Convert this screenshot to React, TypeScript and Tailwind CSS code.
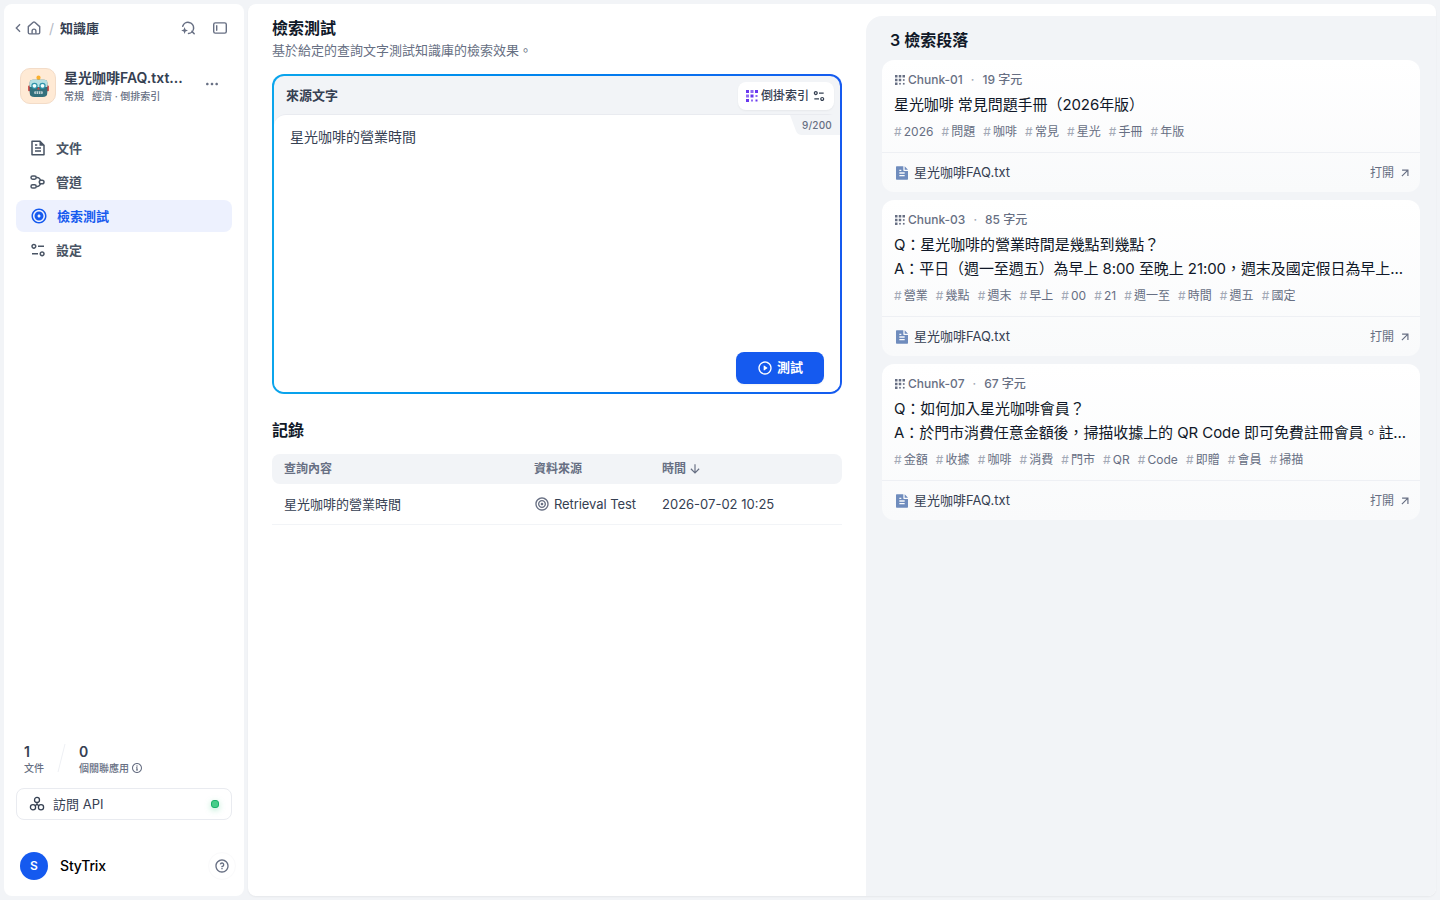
import type { ReactNode, SVGProps } from "react"
import clsx from "clsx"
import {
  RiArrowDownLine, RiArrowLeftSLine, RiArrowRightUpLine, RiEqualizer2Line,
  RiFileTextFill, RiFileTextLine, RiFocus2Fill, RiFocus2Line,
  RiInformation2Line, RiMoreFill, RiPlayCircleLine, RiQuestionLine,
} from "react-icons/ri"

type IconProps = SVGProps<SVGSVGElement>

function HomeIcon(props: IconProps) {
  return (
    <svg viewBox="0 0 16 16" fill="none" stroke="currentColor" strokeWidth="1.4" strokeLinejoin="round" {...props}>
      <path d="M2.3 6.6 7.2 2.3a1.3 1.3 0 0 1 1.6 0l4.9 4.300v6a1.3 1.3 0 0 1-1.3 1.3h-8.800a1.3 1.3 0 0 1-1.3-1.3z" />
      <path d="M6.100 13.800v-2.800a1.900 1.900 0 0 1 3.800 0v2.800" />
    </svg>
  )
}

function QuickSearchIcon(props: IconProps) {
  return (
    <svg viewBox="0 0 16 16" fill="none" stroke="currentColor" strokeWidth="1.5" strokeLinecap="round" {...props}>
      <path d="M2.7 6.2a5.6 5.6 0 1 1 5.800 7.300M11.9 11.4l2.300 2.300" />
      <path d="M4.600 7 5.500 9.600l2.500.9-2.500.9-.9 2.600-.9-2.600-2.500-.9 2.500-.9z" fill="currentColor" stroke="none" />
    </svg>
  )
}

function SidebarIcon(props: IconProps) {
  return (
    <svg viewBox="0 0 16 16" fill="none" stroke="currentColor" strokeWidth="1.4" {...props}>
      <rect x="1.7" y="2.9" width="12.6" height="10.200" rx="1.6" />
      <path d="M4.7 5.8v4.400" strokeLinecap="round" />
    </svg>
  )
}

function PipelineIcon(props: IconProps) {
  return (
    <svg viewBox="0 0 18 18" fill="none" stroke="currentColor" strokeWidth="1.5" {...props}>
      <rect x="2" y="2.900" width="5.200" height="3.300" rx="1.650" />
      <rect x="2" y="11.800" width="5.200" height="3.300" rx="1.650" />
      <rect x="10.300" y="7.200" width="4.700" height="3.600" rx="1.800" />
      <path d="M7.200 4.500h1c1.300 0 2 .5 2.500 1.300l.9 1.400M7.200 13.500h1c1.300 0 2-.5 2.500-1.300l.9-1.400" />
    </svg>
  )
}

function ApiIcon(props: IconProps) {
  return (
    <svg viewBox="0 0 16 16" fill="none" stroke="currentColor" strokeWidth="1.3" {...props}>
      <circle cx="8" cy="3.9" r="2.5" />
      <circle cx="4" cy="11.3" r="2.6" />
      <circle cx="12" cy="11.3" r="2.6" />
      <path d="M8 6.4v2L6 9.8M8 8.4l2 1.4" />
    </svg>
  )
}

// 3x3 dot matrix, dots shrink towards the bottom right
const GRID_DOTS = [
  [0, 0, 3], [4.5, 0, 3], [9, 0, 3],
  [0, 4.5, 3], [4.5, 4.5, 3], [9.5, 5, 2],
  [0, 9, 3], [5, 9.5, 2], [9.5, 9.5, 2],
]

function GridIcon({ faded, ...props }: IconProps & { faded?: boolean }) {
  return (
    <svg viewBox="0 0 12 12" fill="currentColor" {...props}>
      {GRID_DOTS.map(([x, y, s], i) => (
        <rect key={i} x={x} y={y} width={s} height={s} opacity={faded && i % 2 ? 0.75 : 1} />
      ))}
    </svg>
  )
}

function RobotFace(props: IconProps) {
  return (
    <svg viewBox="0 0 24 24" {...props}>
      <path d="M12 2.5v4" stroke="#f2a623" strokeWidth="2.4" />
      <circle cx="12" cy="2.8" r="2.2" fill="#fbb02d" />
      <rect x="1.2" y="11" width="3" height="6" rx="1" fill="#c8403c" />
      <rect x="19.8" y="11" width="3" height="6" rx="1" fill="#c8403c" />
      <path d="M2.800 8.2Q2.800 5 6.2 5h11.6q3.400 0 3.400 3.200v10q0 4.800-4.900 4.800H7.700q-4.900 0-4.900-4.800z" fill="#34707c" />
      <path d="M2.800 8.2Q2.800 5 6.2 5h11.6q3.400 0 3.400 3.200v4.300H2.800z" fill="#b5dfe2" />
      <circle cx="7.800" cy="11.3" r="3.3" fill="#2f93aa" />
      <circle cx="16.200" cy="11.3" r="3.3" fill="#2f93aa" />
      <circle cx="7.800" cy="11.3" r="2" fill="#f4ffff" />
      <circle cx="16.200" cy="11.3" r="2" fill="#f4ffff" />
      <path d="m12 12.6 1.4 2.6h-2.8z" fill="#d8403c" />
      <rect x="7.500" y="17" width="9" height="2.800" rx="1" fill="#c3d3d6" />
      <path d="M9.7 17v2.800M12 17v2.800M14.300 17v2.800" stroke="#34707c" strokeWidth=".8" />
    </svg>
  )
}

const navItems = [
  { label: "文件", icon: <RiFileTextLine className="size-[18px]" /> },
  { label: "管道", icon: <PipelineIcon className="size-[18px]" /> },
  { label: "檢索測試", icon: <RiFocus2Fill className="size-[18px]" />, active: true },
  { label: "設定", icon: <RiEqualizer2Line className="size-[18px]" /> },
]

const chunks = [
  {
    id: "Chunk-01",
    size: 19,
    lines: ["星光咖啡 常見問題手冊（2026年版）"],
    tags: ["2026", "問題", "咖啡", "常見", "星光", "手冊", "年版"],
  },
  {
    id: "Chunk-03",
    size: 85,
    lines: ["Q：星光咖啡的營業時間是幾點到幾點？", "A：平日（週一至週五）為早上 8:00 至晚上 21:00，週末及國定假日為早上..."],
    tags: ["營業", "幾點", "週末", "早上", "00", "21", "週一至", "時間", "週五", "國定"],
  },
  {
    id: "Chunk-07",
    size: 67,
    lines: ["Q：如何加入星光咖啡會員？", "A：於門市消費任意金額後，掃描收據上的 QR Code 即可免費註冊會員。註..."],
    tags: ["金額", "收據", "咖啡", "消費", "門市", "QR", "Code", "即贈", "會員", "掃描"],
  },
]

function Stat({ value, children }: { value: number; children: ReactNode }) {
  return (
    <div>
      <div className="text-[14px] leading-5 font-semibold text-[#354052]">{value}</div>
      <div className="flex h-3 items-center gap-0.5 text-[10px] leading-3 font-medium text-[#676f83]">{children}</div>
    </div>
  )
}

function Sidebar() {
  return (
    <aside className="flex w-60 shrink-0 flex-col rounded-lg bg-white">
      <div className="flex h-12 items-center pr-4 pl-2 text-[#676f83]">
        <RiArrowLeftSLine className="-ml-0.5 size-4" />
        <HomeIcon className="size-4" />
        <span className="ml-[7px] text-[14px] text-[#b5bac5]">/</span>
        <span className="ml-1.5 text-[13px] leading-5 font-semibold text-[#354052]">知識庫</span>
        <QuickSearchIcon className="ml-auto size-4" />
        <SidebarIcon className="ml-4 size-4" />
      </div>

      <div className="mt-3 flex h-11 items-center px-4">
        <div className="flex size-9 shrink-0 items-center justify-center rounded-[10px] border border-[#f3dcc8] bg-[#ffead5]">
          <RobotFace className="size-[23px]" />
        </div>
        <div className="ml-2">
          <div className="text-[14px] leading-5 font-semibold whitespace-nowrap text-[#354052]">星光咖啡FAQ.txt...</div>
          <div className="flex h-4 items-center gap-2 text-[10px] leading-4 font-medium text-[#676f83]">
            <span>常規</span>
            <span>經濟 · 倒排索引</span>
          </div>
        </div>
        <RiMoreFill className="mr-2 mb-1 ml-auto size-4 text-[#676f83]" />
      </div>

      <nav className="mt-6 flex flex-col gap-0.5 px-3">
        {navItems.map(item => (
          <a
            key={item.label}
            className={clsx(
              "flex h-8 items-center gap-[9px] rounded-lg text-[13px] leading-5 font-semibold",
              item.active ? "bg-[#edf1fe] pl-3.5 text-[#155aef]" : "pl-[13px] text-[#495464]"
            )}
          >
            {item.icon}
            <span>{item.label}</span>
          </a>
        ))}
      </nav>

      <div className="mt-auto flex px-5">
        <Stat value={1}>文件</Stat>
        <svg className="mx-3 h-8 w-[11px] text-[#eef0f4]" viewBox="0 0 11 32" stroke="currentColor">
          <path d="M9 2 2 30" />
        </svg>
        <Stat value={0}>
          個關聯應用
          <RiInformation2Line className="size-3" />
        </Stat>
      </div>

      <div className="mx-3 mt-3.5 flex h-8 items-center rounded-lg border border-[#e9ebf0] px-3 text-[13px] text-[#354052]">
        <ApiIcon className="size-4" />
        <span className="mt-0.5 ml-2">訪問 API</span>
        <span className="ml-auto size-2 rounded-[3px] border border-[#17b26a] bg-[#47cd89] shadow-[0_2px_6px_#47cd8966]" />
      </div>

      <div className="mt-6 mb-2 flex h-11 items-center px-4">
        <div className="flex size-7 items-center justify-center rounded-full bg-[#155aef] text-[12px] font-semibold text-white">S</div>
        <span className="ml-3 text-[14px] leading-5 font-medium tracking-[-0.15px] text-black">StyTrix</span>
        <span className="-mr-2 ml-auto flex size-7 items-center justify-center rounded-full border border-[#fafafb] text-[#676f83]">
          <RiQuestionLine className="size-4" />
        </span>
      </div>
    </aside>
  )
}

function QueryBox() {
  return (
    <div className="mt-[14px] h-80 rounded-xl bg-gradient-to-r from-[#0ba5ec] to-[#155aef] p-0.5">
      <div className="flex h-full flex-col overflow-hidden rounded-[10px] bg-[#f2f4f7]">
        <div className="flex h-[38px] shrink-0 items-center justify-between pr-1.5 pl-3">
          <span className="mt-0.5 text-[13px] font-semibold text-[#354052]">來源文字</span>
          <button className="mt-0.5 flex h-7 w-24 items-center rounded-lg bg-white pl-2 text-[12px] font-medium text-[#354052] shadow-xs">
            <GridIcon className="size-3 text-[#6938ef]" faded />
            <span className="ml-[3px]">倒掛索引</span>
            <RiEqualizer2Line className="ml-[3px] size-3.5" />
          </button>
        </div>
        <div className="relative flex-1 rounded-t-xl border-t border-[#e9ebf0] bg-white">
          <div className="absolute top-0 right-0 flex h-5 text-[10px] leading-5 font-medium tracking-[0.2px] text-[#676f83]">
            <svg className="h-5 w-3 text-[#f2f4f7]" viewBox="0 0 12 20" fill="currentColor">
              <path d="M0 0h12v20c-3 0-5-1.500-6-4z" />
            </svg>
            <span className="bg-[#f2f4f7] pr-2">9/200</span>
          </div>
          <p className="px-4 pt-3 text-[14px] leading-5 text-[#354052]">星光咖啡的營業時間</p>
          <button className="absolute right-4 bottom-2 flex h-8 w-22 items-center justify-center gap-1 rounded-lg bg-[#155aef] text-[13px] font-semibold text-white shadow-xs">
            <RiPlayCircleLine className="size-4" />
            <span>測試</span>
          </button>
        </div>
      </div>
    </div>
  )
}

function Records() {
  return (
    <>
      <h2 className="mt-6 text-[16px] leading-6 font-semibold text-[#101828]">記錄</h2>
      <div className="mt-3 grid h-[30px] grid-cols-[250px_128px_1fr] items-center rounded-lg bg-[#f2f4f7] px-3 text-[12px] font-semibold text-[#676f83]">
        <span>查詢內容</span>
        <span>資料來源</span>
        <span className="flex items-center gap-0.5">
          時間
          <RiArrowDownLine className="size-3.5" />
        </span>
      </div>
      <div className="grid h-[41px] grid-cols-[250px_128px_1fr] items-center border-b border-[#f2f4f7] px-3 text-[13px] text-[#354052]">
        <span className="mt-0.5">星光咖啡的營業時間</span>
        <span className="flex items-center gap-1">
          <RiFocus2Line className="size-4 text-[#676f83]" />
          <span className="mt-0.5 tracking-[-0.08px]">Retrieval Test</span>
        </span>
        <span className="mt-0.5">2026-07-02 10:25</span>
      </div>
    </>
  )
}

function ChunkCard({ chunk }: { chunk: (typeof chunks)[number] }) {
  return (
    <article className="rounded-xl bg-gradient-to-b from-white to-[#f9fafb]">
      <div className="px-3 pt-3 pb-2.5">
        <div className="flex h-4 items-center text-[12px] leading-4 font-medium text-[#676f83]">
          <GridIcon className="mx-px size-2.5" />
          <span className="ml-0.5">{chunk.id}</span>
          <span className="mx-2 text-[#a3a9b6]">·</span>
          <span>{chunk.size} 字元</span>
        </div>
        <div className="mt-[5px] text-[15px] leading-6 tracking-[-0.07px] whitespace-nowrap text-[#101828]">
          {chunk.lines.map(line => <p key={line}>{line}</p>)}
        </div>
        <div className="mt-[5px] flex h-5 items-center gap-2 text-[12px] leading-5 text-[#676f83]">
          {chunk.tags.map(tag => (
            <span key={tag} className="flex">
              <span className="w-[9.8px] text-[#a3a9b6]">#</span>
              {tag}
            </span>
          ))}
        </div>
      </div>
      <div className="flex h-10 items-center border-t border-[#eef0f4] pr-2 pl-3 text-[13px] text-[#354052]">
        <RiFileTextFill className="size-4 text-[#6f8cbd]" />
        <span className="ml-1">星光咖啡FAQ.txt</span>
        <span className="ml-auto flex items-center gap-1 text-[12px] text-[#676f83]">
          打開
          <RiArrowRightUpLine className="size-3.5" />
        </span>
      </div>
    </article>
  )
}

export default function App() {
  return (
    <div className="flex h-screen gap-1 overflow-hidden bg-[#f2f4f7] p-1 font-['Inter','Noto_Sans_CJK_TC',sans-serif]">
      <Sidebar />
      <main className="flex flex-1 overflow-hidden rounded-lg bg-white shadow-xs">
        <section className="w-[618px] shrink-0 px-6 pt-3">
          <h1 className="text-[16px] leading-6 font-semibold text-[#101828]">檢索測試</h1>
          <p className="text-[13px] leading-5 text-[#676f83]">基於給定的查詢文字測試知識庫的檢索效果。</p>
          <QueryBox />
          <Records />
        </section>
        <section className="mt-3 min-w-0 flex-1 rounded-tl-2xl bg-[#f2f4f7] px-4 pt-3">
          <h2 className="pl-2 text-[16px] leading-6 font-semibold text-[#101828]">3 檢索段落</h2>
          <div className="mt-2 flex flex-col gap-2">
            {chunks.map(chunk => <ChunkCard key={chunk.id} chunk={chunk} />)}
          </div>
        </section>
      </main>
    </div>
  )
}
